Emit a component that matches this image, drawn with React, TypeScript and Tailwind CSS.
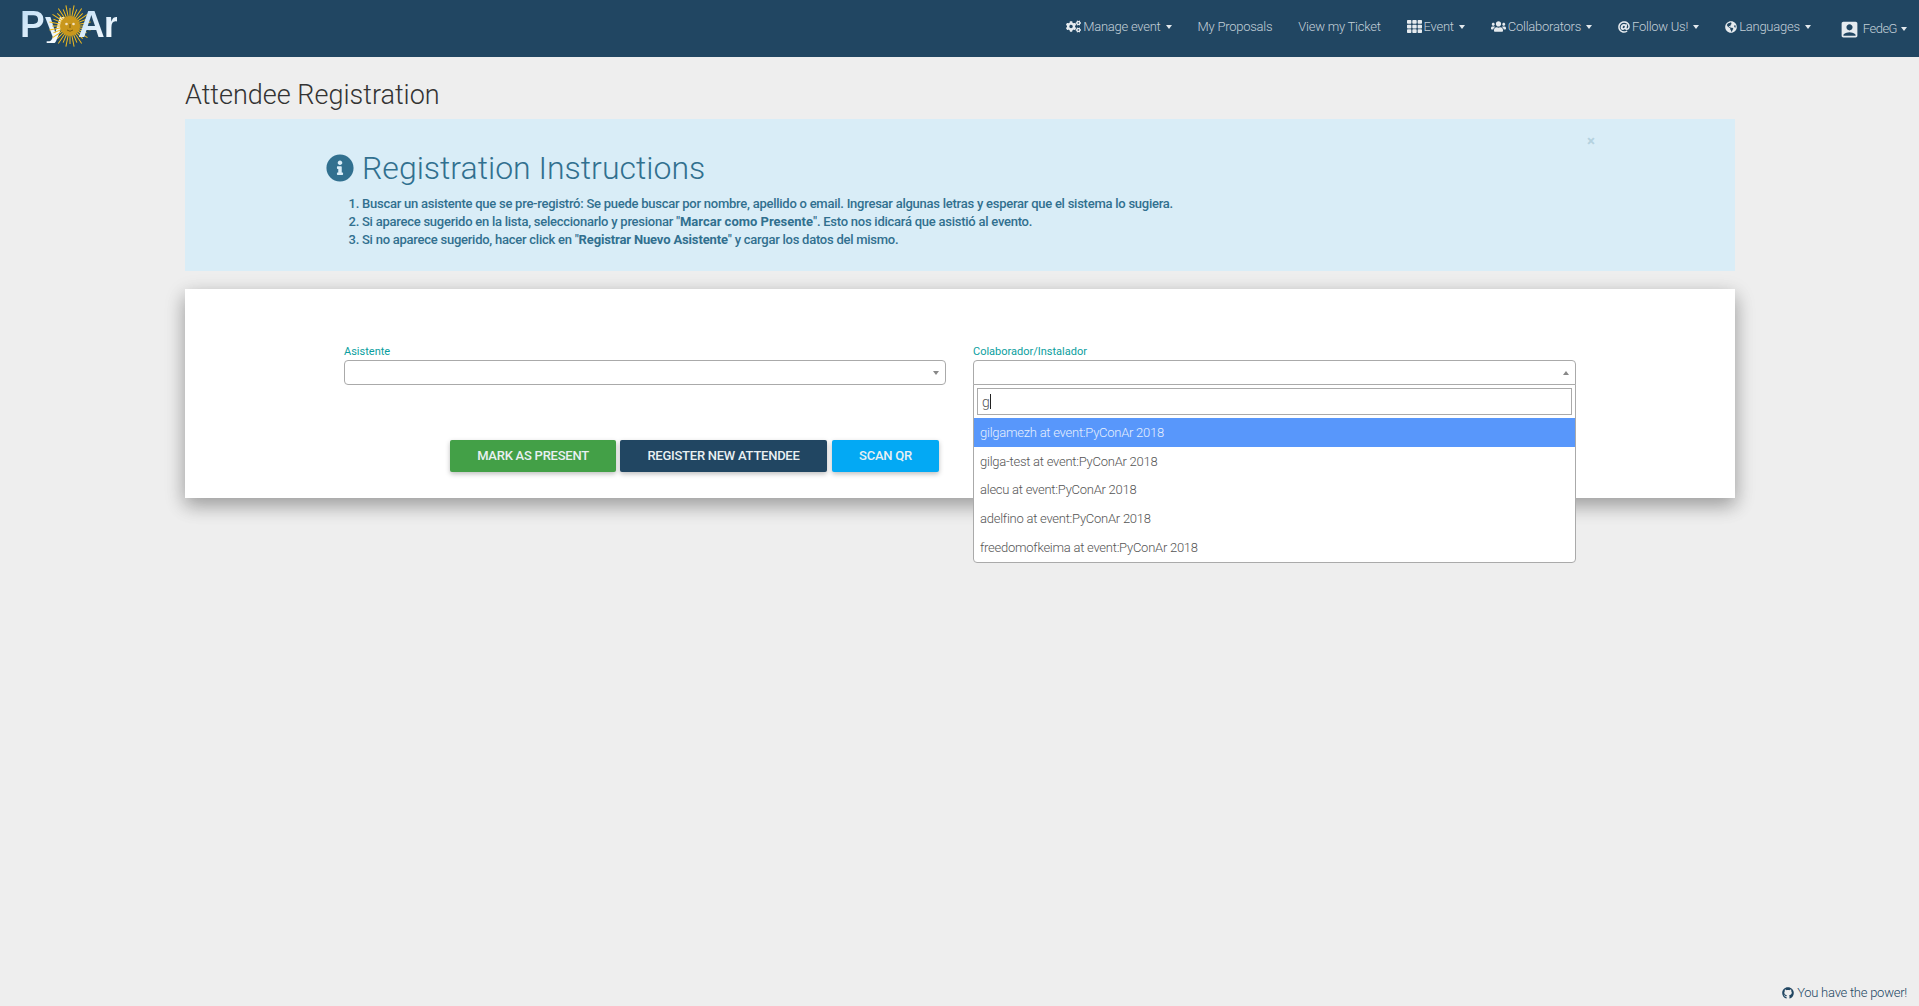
import { FaCogs, FaTh, FaUsers, FaAt, FaGlobeAmericas, FaInfoCircle, FaGithub } from 'react-icons/fa';
import { MdAccountBox } from 'react-icons/md';

const options = [
  'gilgamezh at event:PyConAr 2018',
  'gilga-test at event:PyConAr 2018',
  'alecu at event:PyConAr 2018',
  'adelfino at event:PyConAr 2018',
  'freedomofkeima at event:PyConAr 2018',
];

const rays = Array.from({ length: 32 }, (_, i) => (i * 360) / 32);

function Caret() {
  return <span className="ml-[5px] inline-block w-0 h-0 border-x-[3.5px] border-x-transparent border-t-[4px] border-t-[#e3e9ed]" />;
}

function NavItem({ icon, label, caret = true }: { icon?: React.ReactNode; label: string; caret?: boolean }) {
  return (
    <a className="h-full px-[13px] pb-[4px] flex items-center text-[13px] tracking-[-0.25px] font-light text-[#c3d0d9] whitespace-nowrap">
      {icon && <span className="mr-[2px] text-[#e6ebef]">{icon}</span>}
      {label}
      {caret && <Caret />}
    </a>
  );
}

function Logo() {
  return (
    <div className="relative w-[110px] h-[57px] ml-[20px] shrink-0 font-['Liberation_Sans',sans-serif] font-bold text-[37px] leading-none">
      <span className="absolute left-0 top-[6px] text-transparent bg-clip-text bg-gradient-to-br from-[#bcdcf5] to-white">Py</span>
      <svg width="44" height="44" viewBox="-22 -22 44 44" className="absolute left-[28px] top-[4px]">
        {rays.map((deg, i) => (
          <line key={deg} x1="0" y1={-9} x2="0" y2={i % 2 ? -21 : -18} stroke="#f2bb1d" strokeWidth="1" transform={`rotate(${deg})`} />
        ))}
        <circle r="10" fill="#c9971c" />
        <circle cx="-3.5" cy="-2" r="1.3" fill="#f3e3c0" />
        <circle cx="3.5" cy="-2" r="1.3" fill="#f3e3c0" />
        <path d="M-3 4 Q0 6.5 3 4" stroke="#7a5a10" strokeWidth="1" fill="none" />
        <path d="M0 -2 V2" stroke="#7a5a10" strokeWidth="1" />
      </svg>
      <span className="absolute left-[58px] top-[6px] tracking-[-1px] text-transparent bg-clip-text bg-gradient-to-br from-[#bcdcf5] to-white">Ar</span>
    </div>
  );
}

function SelectBox({ label, open }: { label: string; open?: boolean }) {
  return (
    <div>
      <label className="block text-[11px] leading-[14px] mb-[1px] text-[#0a9e9e]">{label}</label>
      <div className={`h-[25px] bg-white border border-[#aaa] flex items-center justify-end pr-[6px] ${open ? 'rounded-t-[4px]' : 'rounded-[4px]'}`}>
        {open ? (
          <span className="w-0 h-0 border-x-[3.5px] border-x-transparent border-b-[4px] border-b-[#888]" />
        ) : (
          <span className="w-0 h-0 border-x-[3.5px] border-x-transparent border-t-[4px] border-t-[#888]" />
        )}
      </div>
    </div>
  );
}

export default function App() {
  return (
    <div className="min-h-screen h-[1006px] flex flex-col bg-[#eeeeee] font-['Roboto',sans-serif] overflow-hidden">
      <nav className="h-[57px] bg-[#214662] flex items-center justify-between shrink-0">
        <Logo />
        <div className="h-full flex items-center pr-[12px]">
          <NavItem icon={<FaCogs size={15} />} label="Manage event" />
          <NavItem label="My Proposals" caret={false} />
          <NavItem label="View my Ticket" caret={false} />
          <NavItem icon={<FaTh size={15} />} label="Event" />
          <NavItem icon={<FaUsers size={15} />} label="Collaborators" />
          <NavItem icon={<FaAt size={12} />} label="Follow Us!" />
          <NavItem icon={<FaGlobeAmericas size={12} />} label="Languages" />
          <a className="h-full pl-[15px] flex items-center text-[13px] tracking-[-0.5px] font-light text-[#c3d0d9]">
            <MdAccountBox size={21} className="text-[#e6ebef] mr-[3px] mt-[2px]" />
            <span>FedeG</span>
            <span className="ml-[4px] w-0 h-0 border-x-[3px] border-x-transparent border-t-[4px] border-t-[#e3e9ed]" />
          </a>
        </div>
      </nav>

      <main className="mx-[185px] w-[1550px] flex-1">
        <h1 className="text-[27px] leading-[30px] font-light text-[#333] mt-[23px] mb-[9px]">Attendee Registration</h1>

        <div className="relative h-[152px] bg-[#d9edf7] text-[#31708f] pl-[141px] pt-[29px]">
          <span className="absolute right-[140px] top-[13px] text-[15px] font-bold leading-[18px] text-[#b5d2df]">×</span>
          <div className="flex items-center gap-[8px] h-[39px]">
            <FaInfoCircle size={28} />
            <h2 className="text-[32px] leading-[39px] font-light mt-[2px]">Registration Instructions</h2>
          </div>
          <ol className="list-decimal pl-[36px] mt-[8px] text-[13px] tracking-[-0.25px] leading-[18px] font-medium">
            <li>Buscar un asistente que se pre-registró: Se puede buscar por nombre, apellido o email. Ingresar algunas letras y esperar que el sistema lo sugiera.</li>
            <li>Si aparece sugerido en la lista, seleccionarlo y presionar "<b className="font-bold tracking-[0px]">Marcar como Presente</b>". Esto nos idicará que asistió al evento.</li>
            <li>Si no aparece sugerido, hacer click en "<b className="font-bold tracking-[-0.15px]">Registrar Nuevo Asistente</b>" y cargar los datos del mismo.</li>
          </ol>
        </div>

        <div className="h-[209px] mt-[18px] bg-white px-[159px] pt-[56px] shadow-[0_8px_17px_0_rgba(0,0,0,0.2),0_6px_20px_0_rgba(0,0,0,0.19)]">
          <div className="grid grid-cols-[602px_603px] gap-x-[27px]">
            <SelectBox label="Asistente" />
            <div className="relative">
              <SelectBox label="Colaborador/Instalador" open />
              <div className="absolute z-10 left-0 right-0 top-[39px] h-[179px] bg-white border border-[#aaa] rounded-b-[4px] text-[13px] tracking-[-0.25px] text-[#555] font-light">
                <div className="p-[3px]">
                  <div className="h-[27px] border border-[#aaa] flex items-center pl-[4px] text-[14px] leading-none">
                    g<span className="w-px h-[15px] bg-[#222]" />
                  </div>
                </div>
                {options.map((o, i) => (
                  <div key={o} className={`h-[28.7px] flex items-center pl-[6px] ${i === 0 ? 'bg-[#5897fb] text-[#e6effd]' : 'pt-[1px]'}`}>{o}</div>
                ))}
              </div>
            </div>
          </div>
          <div className="flex gap-[4px] mt-[55px] ml-[106px] text-[13px] tracking-[-0.25px] font-medium uppercase text-[#e9f0f2]">
            <button className="w-[166px] h-[32px] rounded-[2px] bg-[#43a047] uppercase shadow-[0_2px_5px_0_rgba(0,0,0,0.26)]">Mark as present</button>
            <button className="w-[207px] h-[32px] rounded-[2px] bg-[#214662] uppercase shadow-[0_2px_5px_0_rgba(0,0,0,0.26)]">Register new attendee</button>
            <button className="ml-[1px] w-[107px] h-[32px] rounded-[2px] bg-[#03a9f4] uppercase shadow-[0_2px_5px_0_rgba(0,0,0,0.26)]">Scan QR</button>
          </div>
        </div>
      </main>

      <footer className="h-[21px] pr-[12px] flex items-start justify-end gap-[3px] text-[13px] tracking-[-0.25px] leading-[15px] font-light text-[#214662]">
        <FaGithub size={12} className="mt-[2px]" />
        <span>You have the power!</span>
      </footer>
    </div>
  );
}
